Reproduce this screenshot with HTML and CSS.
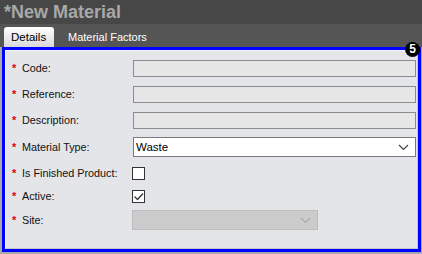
FILE: index.html
```html
<!DOCTYPE html>
<html lang="en">
<head>
    <meta charset="UTF-8">
    <title>New Material</title>
    <link rel="stylesheet" href="styles.css">
</head>
<body>
    <div class="title">*New Material</div>

    <div class="tabs">
        <div class="tab active">Details</div>
        <div class="tab">Material Factors</div>
    </div>

    <!-- Details panel -->
    <div class="panel">
        <span class="badge">5</span>
        <div class="inner">
            <div class="row">
                <label><span class="req">*</span>Code:</label>
                <div class="field disabled"></div>
            </div>
            <div class="row">
                <label><span class="req">*</span>Reference:</label>
                <div class="field disabled"></div>
            </div>
            <div class="row">
                <label><span class="req">*</span>Description:</label>
                <div class="field disabled"></div>
            </div>
            <div class="row tall">
                <label><span class="req">*</span>Material Type:</label>
                <div class="select">
                    <span>Waste</span>
                    <svg width="11" height="7" viewBox="0 0 11 7"><path d="M1 1 L5.5 5.5 L10 1" fill="none" stroke="#444" stroke-width="1.2"/></svg>
                </div>
            </div>
            <div class="row check">
                <label><span class="req">*</span>Is Finished Product:</label>
                <div class="checkbox"></div>
            </div>
            <div class="row check short">
                <label><span class="req">*</span>Active:</label>
                <div class="checkbox">
                    <svg width="11" height="11" viewBox="0 0 11 11"><path d="M1.5 5.5 L4.5 8.5 L10 2.5" fill="none" stroke="#333" stroke-width="1.3"/></svg>
                </div>
            </div>
            <div class="row">
                <label><span class="req">*</span>Site:</label>
                <div class="select site">
                    <span></span>
                    <svg width="11" height="7" viewBox="0 0 11 7"><path d="M1 1 L5.5 5.5 L10 1" fill="none" stroke="#aaa" stroke-width="1.2"/></svg>
                </div>
            </div>
        </div>
    </div>
</body>
</html>
```

FILE: styles.css
```css
body {
    margin: 0;
    background-color: #a9a9a9;
    font-family: "Liberation Sans", Arial, sans-serif;
    font-size: 11px;
    color: #111;
}

.title {
    height: 24px;
    line-height: 24px;
    padding-left: 4px;
    background-color: #474747;
    color: #a8a8a8;
    font-weight: bold;
    font-size: 18px;
}

.tabs {
    height: 23px;
    display: flex;
    align-items: flex-end;
    padding-left: 4px;
    background-color: #555555;
}

.tab {
    height: 20px;
    line-height: 20px;
    padding: 0 12px 0 14px;
    color: white;
    font-size: 11px;
}

.tab.active {
    width: 36px;
    padding: 0 7px;
    color: #000;
    font-size: 11.5px;
    border-radius: 3px 3px 0 0;
    background: linear-gradient(#ffffff, #d8d8d8);
}

.panel {
    position: relative;
    height: 199px;
    margin: 0 1px 0 2px;
    border: 3px solid #0000ff;
    background-color: #e4e5e9;
}

.badge {
    position: absolute;
    top: -8px;
    right: -2px;
    width: 15px;
    height: 15px;
    border-radius: 50%;
    background-color: #000;
    color: #fff;
    font-weight: bold;
    font-size: 12px;
    line-height: 15px;
    text-align: center;
}

.inner {
    height: 100%;
    box-sizing: border-box;
    padding-top: 4px;
    border-left: 1px solid #f6f6f6;
    border-top: 1px solid #f6f6f6;
    border-right: 1px solid #c4c4c4;
    border-bottom: 1px solid #c4c4c4;
}

.row {
    height: 26px;
    display: flex;
    align-items: center;
}

.row.tall {
    height: 28px;
}

.row.check {
    height: 24px;
}

.row.check.short {
    height: 22px;
}

label {
    width: 121px;
    padding-left: 6px;
    flex-shrink: 0;
    font-size: 10.8px;
}

.req {
    display: inline-block;
    width: 10px;
    color: #e00000;
    font-weight: bold;
    font-size: 11px;
}

.field {
    height: 15px;
    width: 281px;
    border: 1px solid #8c8c8c;
}

.field.disabled {
    background-color: #e6e6e6;
}

.select {
    display: flex;
    align-items: center;
    justify-content: space-between;
    padding: 0 6px 0 2px;
    box-sizing: border-box;
    width: 283px;
    height: 20px;
    border: 1px solid #7a7a7a;
    background-color: #fff;
    color: #000;
    font-size: 11.5px;
}

.select.site {
    width: 186px;
    margin-left: -1px;
    border-color: #bdbdbd;
    background-color: #cccccc;
}

.checkbox {
    width: 11px;
    height: 11px;
    margin-left: -1px;
    border: 1px solid #333;
    background-color: #fff;
    display: flex;
    align-items: center;
    justify-content: center;
}
```
